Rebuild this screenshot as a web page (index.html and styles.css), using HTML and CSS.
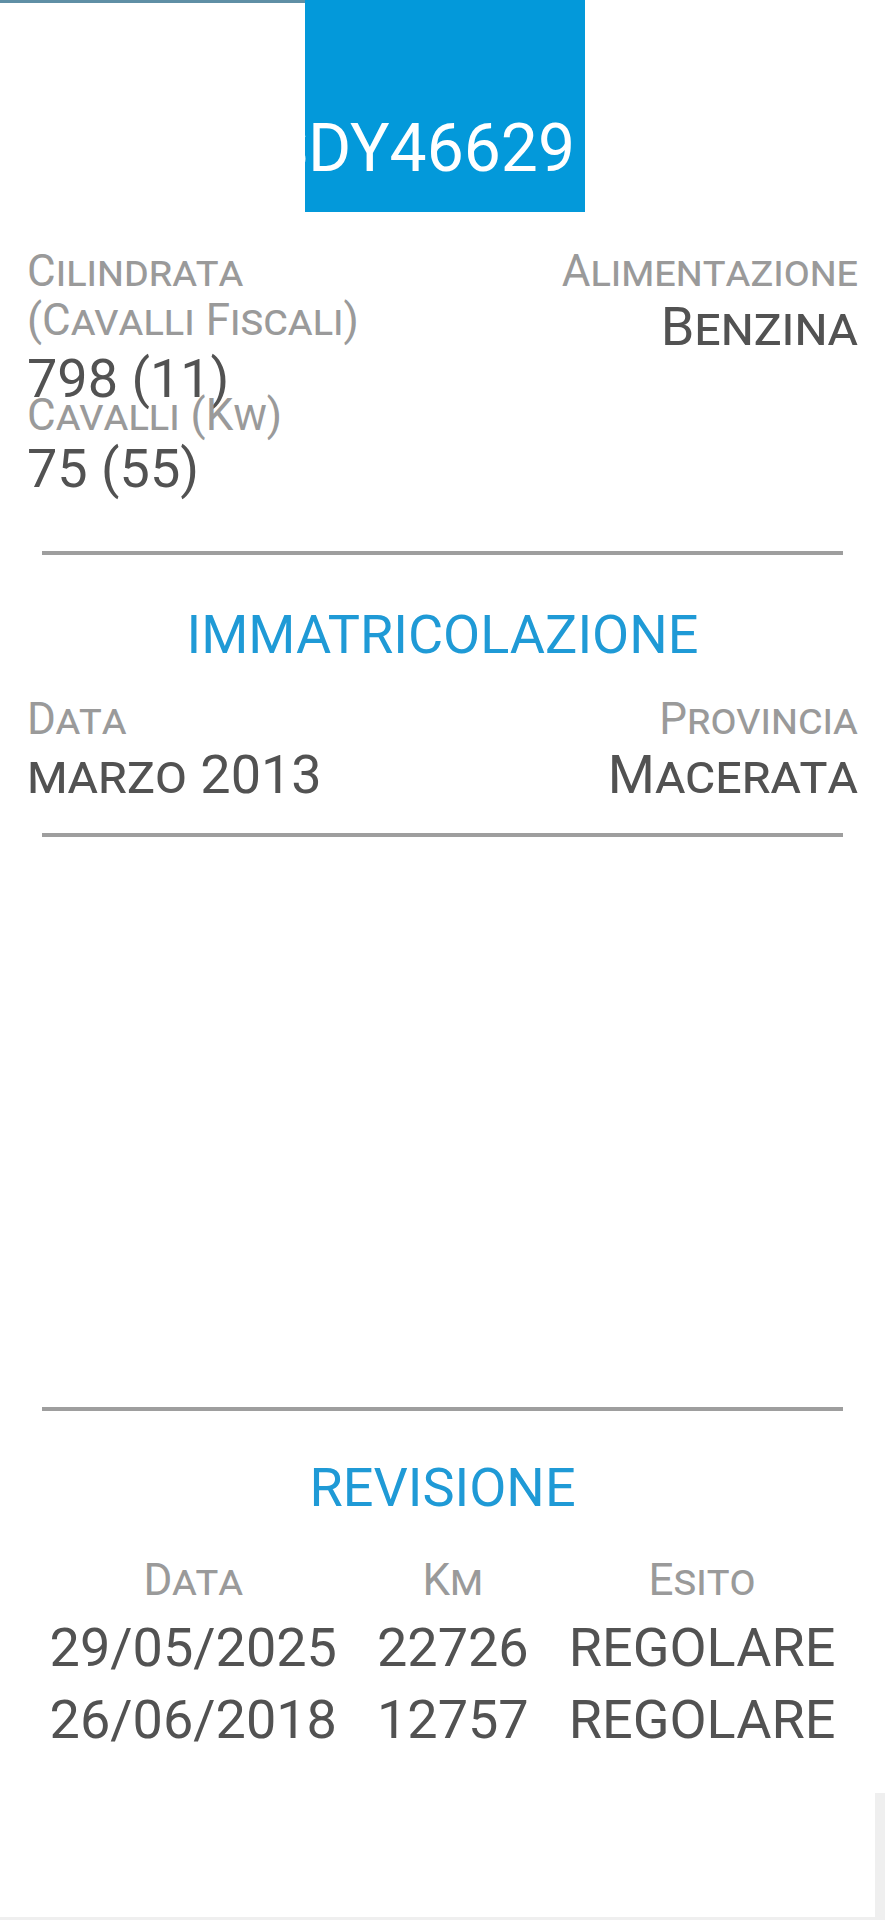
FILE: index.html
```html
<!DOCTYPE html>
<html lang="it">
<head>
    <meta charset="UTF-8">
    <meta name="viewport" content="width=device-width, initial-scale=1.0">
    <title>Dettagli veicolo</title>
    <link rel="stylesheet" href="styles.css">
</head>
<body>

    <!-- Targa -->
    <header class="plate-bar">
        <div class="plate-bar-side"></div>
        <div class="plate"><span>SDY46629</span></div>
        <div class="plate-bar-rest"></div>
    </header>

    <main class="content">
        <!-- Dati tecnici -->
        <section class="specs">
            <div class="col">
                <div class="label label-wrap">Cilindrata (Cavalli Fiscali)</div>
                <div class="value value-first">798 (11)</div>
                <div class="label label-tight">Cavalli (Kw)</div>
                <div class="value value-last">75 (55)</div>
            </div>
            <div class="col col-right">
                <div class="label">Alimentazione</div>
                <div class="value">Benzina</div>
            </div>
        </section>

        <hr class="divider">

        <!-- Immatricolazione -->
        <h2 class="section-title section-title-top">Immatricolazione</h2>
        <section class="pair">
            <div class="col">
                <div class="label">Data</div>
                <div class="value">marzo 2013</div>
            </div>
            <div class="col col-right">
                <div class="label">Provincia</div>
                <div class="value">Macerata</div>
            </div>
        </section>

        <hr class="divider">

        <div class="empty-block"></div>

        <hr class="divider">

        <!-- Revisione -->
        <h2 class="section-title">Revisione</h2>
        <table class="rev-table">
            <thead>
                <tr>
                    <th>Data</th>
                    <th>Km</th>
                    <th>Esito</th>
                </tr>
            </thead>
            <tbody>
                <tr>
                    <td>29/05/2025</td>
                    <td>22726</td>
                    <td>REGOLARE</td>
                </tr>
                <tr>
                    <td>26/06/2018</td>
                    <td>12757</td>
                    <td>REGOLARE</td>
                </tr>
            </tbody>
        </table>
    </main>

    <div class="bottom-edge"></div>

</body>
</html>
```

FILE: styles.css
```css
body {
    margin: 0;
    padding: 0;
    background-color: #ffffff;
    font-family: Roboto, "Noto Sans", sans-serif;
    overflow: hidden;
    height: 1920px;
}

/* targa */
.plate-bar {
    display: flex;
    height: 212px;
}
.plate-bar-side {
    width: 305px;
    height: 3px;
    background-color: #5f8fa5;
}
.plate {
    width: 280px;
    background-color: #0399da;
    color: #ffffff;
    font-size: 66px;
    display: flex;
    justify-content: flex-end;
    align-items: flex-end;
    overflow: hidden;
    white-space: nowrap;
    padding-right: 10px;
    box-sizing: border-box;
    line-height: 1;
    padding-bottom: 30px;
}
.plate-bar-rest {
    flex: 1;
}

.content {
    padding: 35px 27px 0 27px;
}

/* righe etichetta / valore */
.specs,
.pair {
    display: flex;
    justify-content: space-between;
    align-items: flex-start;
}
.col {
    display: flex;
    flex-direction: column;
}
.col-right {
    align-items: flex-end;
    text-align: right;
}
.label {
    font-size: 44px;
    line-height: 49px;
    color: #9a9a9a;
    font-variant: small-caps;
}
.label-wrap {
    max-width: 380px;
}
.label-tight {
    margin-top: -19px;
}
.value {
    font-size: 54px;
    line-height: 62px;
    color: #525252;
    font-variant: small-caps;
}
.value-first {
    margin-top: 3px;
}
.value-last {
    margin-top: -2px;
}

.divider {
    border: none;
    height: 4px;
    background-color: #9e9e9e;
    margin: 51px 15px 0 15px;
}
.pair + .divider {
    margin-top: 27px;
}

.section-title {
    font-size: 54px;
    line-height: 64px;
    font-weight: normal;
    color: #1f9ad6;
    text-align: center;
    text-transform: uppercase;
    margin: 45px 0 28px 0;
}
.section-title-top {
    margin-top: 48px;
}

.empty-block {
    height: 570px;
}
.empty-block + .divider {
    margin-top: 0;
}

/* tabella revisioni */
.rev-table {
    margin: 0 auto;
    border-collapse: collapse;
}
.rev-table th {
    font-size: 44px;
    line-height: 64px;
    font-weight: normal;
    color: #9a9a9a;
    font-variant: small-caps;
    padding: 0 20px;
}
.rev-table td {
    font-size: 54px;
    line-height: 72px;
    color: #525252;
    text-align: center;
    padding: 0 20px;
}

.bottom-edge {
    margin-top: 37px;
    height: 124px;
    border-right: 10px solid #efefef;
    border-bottom: 3px solid #efefef;
}
```
